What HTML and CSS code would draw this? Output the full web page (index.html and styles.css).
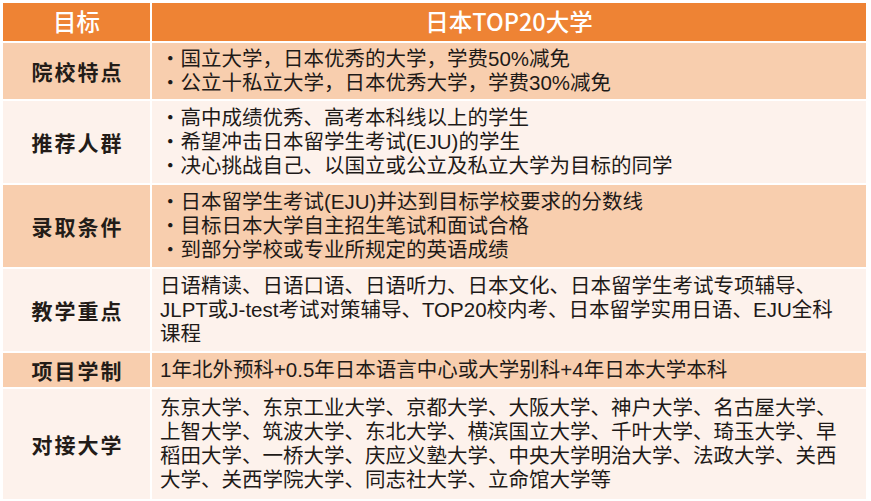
FILE: index.html
```html
<!DOCTYPE html>
<html lang="zh-CN">
<head>
<meta charset="utf-8">
<title>日本TOP20大学</title>
<link rel="stylesheet" href="styles.css">
</head>
<body>
<div class="table">
  <div class="cell head">目标</div>
  <div class="cell head">日本TOP20大学</div>

  <div class="cell label dark">院校特点</div>
  <div class="cell body dark">
    <div>・国立大学，日本优秀的大学，学费50%减免</div>
    <div>・公立十私立大学，日本优秀大学，学费30%减免</div>
  </div>

  <div class="cell label light">推荐人群</div>
  <div class="cell body light">
    <div>・高中成绩优秀、高考本科线以上的学生</div>
    <div>・希望冲击日本留学生考试(EJU)的学生</div>
    <div>・决心挑战自己、以国立或公立及私立大学为目标的同学</div>
  </div>

  <div class="cell label dark">录取条件</div>
  <div class="cell body dark">
    <div>・日本留学生考试(EJU)并达到目标学校要求的分数线</div>
    <div>・目标日本大学自主招生笔试和面试合格</div>
    <div>・到部分学校或专业所规定的英语成绩</div>
  </div>

  <div class="cell label light">教学重点</div>
  <div class="cell body light plain">
    <div>日语精读、日语口语、日语听力、日本文化、日本留学生考试专项辅导、JLPT或J-test考试对策辅导、TOP20校内考、日本留学实用日语、EJU全科课程</div>
  </div>

  <div class="cell label dark">项目学制</div>
  <div class="cell body dark plain">
    <div>1年北外预科+0.5年日本语言中心或大学别科+4年日本大学本科</div>
  </div>

  <div class="cell label light">对接大学</div>
  <div class="cell body light plain">
    <div>东京大学、东京工业大学、京都大学、大阪大学、神户大学、名古屋大学、上智大学、筑波大学、东北大学、横滨国立大学、千叶大学、琦玉大学、早稻田大学、一桥大学、庆应义塾大学、中央大学明治大学、法政大学、关西大学、关西学院大学、同志社大学、立命馆大学等</div>
  </div>
</div>
</body>
</html>
```

FILE: styles.css
```css
html, body {
  margin: 0;
  padding: 0;
  background: #ffffff;
}

body {
  padding: 3px 5px 0 3px;
  font-family: "Liberation Sans", "Noto Sans CJK SC", sans-serif;
  color: #1e1a18;
}

.table {
  display: grid;
  grid-template-columns: 147px 1fr;
  grid-template-rows: 38px 56px 82px 82px 82px 34px 110px;
  gap: 2px;
  background: #ffffff;
}

.cell {
  display: flex;
  align-items: center;
}

.head {
  background: #ee8334;
  color: #ffffff;
  font-family: "Noto Sans CJK SC", sans-serif;
  font-size: 23.5px;
  font-weight: 500;
  justify-content: center;
  line-height: 1;
}

.label {
  justify-content: center;
  font-family: "Noto Sans CJK SC", sans-serif;
  font-size: 21px;
  font-weight: 700;
  letter-spacing: 2px;
  padding-left: 2px;
  color: #231c18;
}

.dark {
  background: #f8ceae;
}

.light {
  background: #fdf2ec;
}

.body {
  flex-direction: column;
  align-items: flex-start;
  justify-content: center;
  font-size: 20.5px;
  line-height: 24px;
  padding: 0 18px 0 8px;
}
```
